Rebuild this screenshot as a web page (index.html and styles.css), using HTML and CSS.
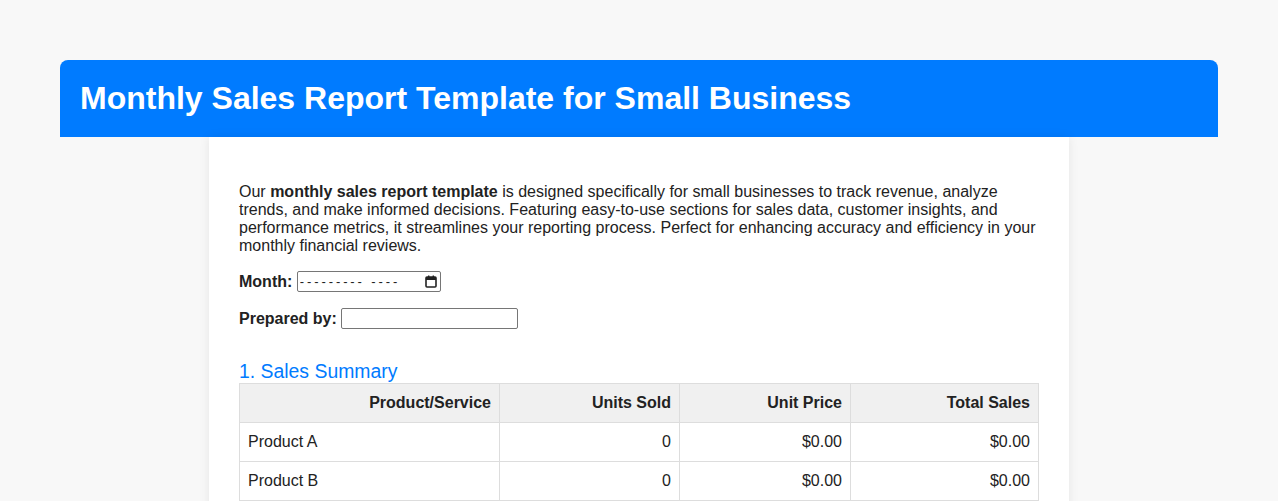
FILE: index.html
```html
<!DOCTYPE html>
<html lang="en">
<head>
<meta charset="utf-8">
<title>Monthly Sales Report Template for Small Business</title>
<link rel="stylesheet" href="styles.css">
</head>
<body>
<header class="site-header">
  <h1>Monthly Sales Report Template for Small Business</h1>
</header>
<main class="container">
  <p class="intro">Our <strong>monthly sales report template</strong> is designed specifically for small businesses to track revenue, analyze trends, and make informed decisions. Featuring easy-to-use sections for sales data, customer insights, and performance metrics, it streamlines your reporting process. Perfect for enhancing accuracy and efficiency in your monthly financial reviews.</p>
  <div class="field">
    <label for="month">Month:</label>
    <span class="month-wrap">
      <input type="text" id="month" class="month-input" placeholder="--------- ----">
      <svg class="cal-icon" viewBox="0 0 12 13" width="12" height="13" aria-hidden="true">
        <rect x="1" y="2" width="10" height="10" rx="1" fill="none" stroke="#222" stroke-width="1.6"/>
        <rect x="1" y="2" width="10" height="3" fill="#222"/>
        <rect x="3" y="0.5" width="1.4" height="2.5" fill="#222"/>
        <rect x="7.6" y="0.5" width="1.4" height="2.5" fill="#222"/>
      </svg>
    </span>
  </div>
  <div class="field">
    <label for="prepared">Prepared by:</label>
    <input type="text" id="prepared" class="text-input">
  </div>
  <h2 class="section-title">1. Sales Summary</h2>
  <table class="sales-table">
    <thead>
      <tr>
        <th class="col-product">Product/Service</th>
        <th class="col-units">Units Sold</th>
        <th class="col-price">Unit Price</th>
        <th class="col-total">Total Sales</th>
      </tr>
    </thead>
    <tbody>
      <tr>
        <td>Product A</td>
        <td class="num">0</td>
        <td class="num">$0.00</td>
        <td class="num">$0.00</td>
      </tr>
      <tr>
        <td>Product B</td>
        <td class="num">0</td>
        <td class="num">$0.00</td>
        <td class="num">$0.00</td>
      </tr>
      <tr>
        <td>Product C</td>
        <td class="num">0</td>
        <td class="num">$0.00</td>
        <td class="num">$0.00</td>
      </tr>
    </tbody>
  </table>
</main>
</body>
</html>
```
FILE: styles.css
```css
html, body {
  margin: 0;
  padding: 0;
}
body {
  background: #f8f8f8;
  font-family: "Liberation Sans", Arial, sans-serif;
  color: #222;
  padding: 60px 60px 0;
}
.site-header {
  background: #007bff;
  color: #fff;
  border-radius: 8px 8px 0 0;
  padding: 20px 20px;
}
.site-header h1 {
  margin: 0;
  font-size: 32px;
  line-height: 37px;
  font-weight: bold;
}
.container {
  max-width: 800px;
  margin: 0 auto;
  background: #fff;
  padding: 30px;
  box-shadow: 0 0 10px rgba(0,0,0,0.08);
}
.intro {
  margin: 16px 0 16px;
  font-size: 16px;
  line-height: 18px;
}
.field {
  margin: 0 0 16px;
  font-size: 16px;
  line-height: 21px;
}
.field label {
  font-weight: bold;
}
.month-wrap {
  position: relative;
  display: inline-block;
  vertical-align: middle;
  height: 21px;
  margin-top: -2px;
}
.month-input {
  width: 144px;
  height: 21px;
  box-sizing: border-box;
  font-family: "Liberation Sans", Arial, sans-serif;
  font-size: 13px;
  letter-spacing: 2.9px;
  border: 1px solid #767676;
  border-radius: 2px;
  padding: 1px 2px;
  display: block;
}
.month-input::placeholder {
  color: #222;
  opacity: 1;
}
.cal-icon {
  position: absolute;
  right: 4px;
  top: 4px;
}
.text-input {
  width: 177px;
  height: 21px;
  box-sizing: border-box;
  border: 1px solid #767676;
  border-radius: 2px;
  vertical-align: middle;
  margin-top: -3px;
}
.section-title {
  color: #007bff;
  font-size: 19.4px;
  font-weight: normal;
  margin: 30px 0 0;
  line-height: 24px;
}
.sales-table {
  width: 800px;
  border-collapse: collapse;
  font-size: 16px;
}
.sales-table th,
.sales-table td {
  border: 1px solid #ddd;
  padding: 10px 8px;
  height: 18px;
}
.sales-table th {
  background: #f0f0f0;
  text-align: right;
  font-weight: bold;
}
.sales-table td {
  text-align: left;
}
.sales-table td.num {
  text-align: right;
}
.col-product { width: 243px; }
.col-units { width: 163px; }
.col-price { width: 154px; }
.col-total { width: 171px; }
```
